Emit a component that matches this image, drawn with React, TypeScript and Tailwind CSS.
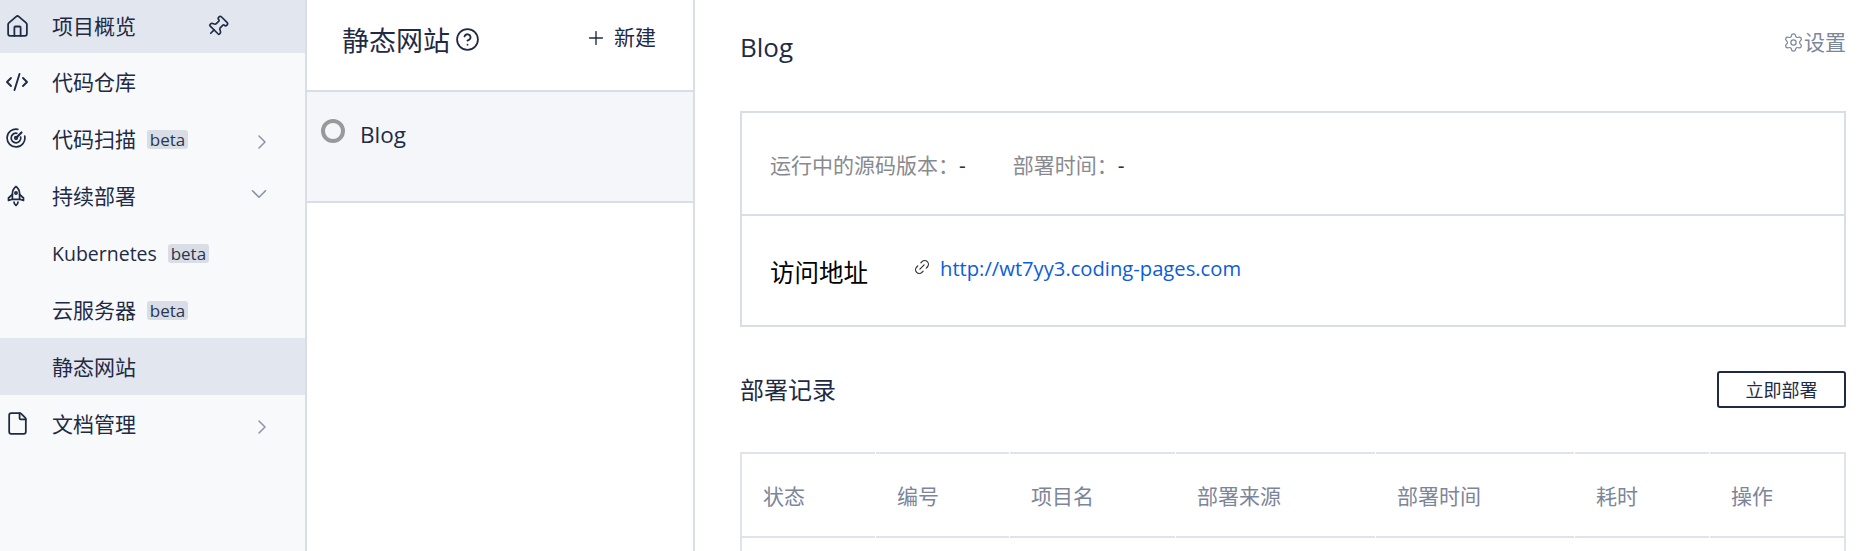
import React from "react";
import { House, CodeXml, File, Pin, CircleHelp, Plus, Link2, Settings, ChevronRight, ChevronDown } from "lucide-react";

const ff = { fontFamily: '"Open Sans","Noto Sans CJK SC",sans-serif' };

function Radar() {
  return (
    <svg width="20" height="20" viewBox="0 0 20 20" fill="none" stroke="#1f2a44" strokeWidth="1.7" strokeLinecap="round" className="ml-[-3px] mt-[-2px]">
      <path d="M11.800 1.300A8.900 8.900 0 1 0 18.700 8.200" />
      <path d="M10.800 5.300a4.800 4.800 0 1 0 3.900 3.900" />
      <circle cx="10" cy="10" r="1.300" />
      <path d="M10.500 9.500 15.500 4.500" strokeWidth="2.200" />
    </svg>
  );
}

function RocketIcon() {
  return (
    <svg width="20" height="22" viewBox="0 0 20 22" fill="none" stroke="#1f2a44" strokeWidth="1.700" strokeLinejoin="round" strokeLinecap="round" className="ml-[-2px]">
      <path d="M10 1.500c2.600 2 3.600 4.600 3.600 7.200v5.600H6.400V8.700C6.400 6.100 7.400 3.500 10 1.500Z" />
      <path d="M6.400 9.500 2.500 13v2.500l3.900-1.200" />
      <path d="M13.600 9.500 17.500 13v2.500l-3.900-1.200" />
      <circle cx="10" cy="8" r="1.100" />
      <path d="M8 17c0 1.500.8 2.700 2 3.500 1.200-.8 2-2 2-3.500" />
    </svg>
  );
}

function Beta() {
  return (
    <span className="ml-[11px] mt-[2px] inline-flex h-[19px] w-[41px] items-center justify-center rounded-[3px] bg-[#d8dde6] text-[17px] leading-none text-[#2a3550]">
      beta
    </span>
  );
}

function NavRow({
  icon,
  label,
  h = "h-[57px]",
  active = false,
  beta = false,
  chevron,
  latin = false,
  first = false,
  children,
}: {
  icon?: React.ReactNode;
  label: string;
  h?: string;
  active?: boolean;
  beta?: boolean;
  chevron?: "right" | "down";
  latin?: boolean;
  first?: boolean;
  children?: React.ReactNode;
}) {
  return (
    <div className={`flex ${h} items-center ${active ? "bg-[#e2e6ef]" : ""}`}>
      <div className="flex w-[52px] shrink-0 items-center justify-center pr-[18px]">{icon}</div>
      <span className={`${latin ? "text-[19.5px]" : "text-[21px]"} ${first ? "" : "mt-[2px]"} leading-none text-[#1f2a44]`}>{label}</span>
      {beta && <Beta />}
      {children}
      {chevron === "right" && (
        <ChevronRight size={24} strokeWidth={1.5} className="ml-auto mr-[31px] mt-[6px] text-[#8a94a8]" />
      )}
      {chevron === "down" && (
        <ChevronDown size={26} strokeWidth={1.5} className="ml-auto mr-[33px] mt-[-3px] text-[#8a94a8]" />
      )}
    </div>
  );
}

const cols: [string, string][] = [
  ["状态", "w-[133px]"],
  ["编号", "w-[133px]"],
  ["项目名", "w-[165px]"],
  ["部署来源", "w-[199px]"],
  ["部署时间", "w-[198px]"],
  ["耗时", "w-[134px]"],
  ["操作", "flex-1"],
];

export default function App() {
  return (
    <div className="flex h-screen w-full overflow-hidden bg-white" style={ff}>
      <aside className="w-[307px] shrink-0 border-r-2 border-[#d9dde6] bg-[#f8f9fb]">
        <NavRow h="h-[53px]" active first label="项目概览" icon={<House size={25} strokeWidth={1.7} color="#1f2a44" />}>
          <Pin size={23} strokeWidth={1.7} color="#1f2a44" className="ml-[70px] rotate-45" />
        </NavRow>
        <NavRow label="代码仓库" icon={<CodeXml size={24} strokeWidth={1.9} color="#1f2a44" />} />
        <NavRow label="代码扫描" beta chevron="right" icon={<Radar />} />
        <NavRow label="持续部署" chevron="down" icon={<RocketIcon />} />
        <NavRow label="Kubernetes" latin beta />
        <NavRow label="云服务器" beta />
        <NavRow active label="静态网站" />
        <NavRow label="文档管理" chevron="right" icon={<File size={25} strokeWidth={1.7} color="#1f2a44" />} />
      </aside>

      <section className="w-[388px] shrink-0 border-r-2 border-[#d9dde6]">
        <div className="flex h-[92px] items-start border-b-2 border-[#d9dde6] pl-[35px] pr-[37px] pt-[27px]">
          <span className="text-[27px] leading-none text-[#1f2a44]">静态网站</span>
          <CircleHelp size={25} strokeWidth={1.7} color="#1f2a44" className="ml-[5px]" />
          <Plus size={22} strokeWidth={1.5} color="#1f2a44" className="ml-auto" />
          <span className="ml-[7px] text-[21px] leading-none text-[#1f2a44]">新建</span>
        </div>
        <div className="flex h-[111px] items-start border-b-2 border-[#d9dde6] bg-[#f5f6fa] pl-[14px] pt-[27px]">
          <span className="h-[24px] w-[24px] rounded-full border-[4px] border-[#999999]" />
          <span className="ml-[15px] mt-[1px] text-[22.5px] leading-[30px] text-[#1f2a44]">Blog</span>
        </div>
      </section>

      <main className="flex min-w-0 flex-1 flex-col pl-[45px] pr-[16px]">
        <div className="flex h-[113px] shrink-0 items-start justify-between">
          <span className="mt-[29px] text-[26px] font-medium leading-[36px] text-[#1f2a44]">Blog</span>
          <span className="mt-[27px] flex items-center text-[21px] leading-[30px] text-[#7c869a]">
            <Settings size={21} strokeWidth={1.4} />
            <span>设置</span>
          </span>
        </div>
        <div className="shrink-0 border-2 border-t-0 border-[#d8dde6] [box-shadow:0_-2px_0_#d8dde6]">
          <div className="flex h-[103px] items-center border-b-2 border-[#d8dde6] pl-[28px] pt-[4px] text-[21px] leading-none text-[#888a90]">
            <span>运行中的源码版本：</span>
            <span className="text-[#333]">-</span>
            <span className="ml-[47px]">部署时间：</span>
            <span className="text-[#333]">-</span>
          </div>
          <div className="flex h-[109px] items-center pl-[28px]">
            <span className="mt-[5px] text-[24.5px] leading-none text-black">访问地址</span>
            <Link2 size={18} strokeWidth={1.6} color="#333" className="ml-[45px] mt-[-7px] -rotate-45" />
            <span className="ml-[9px] mt-[-4px] text-[20.2px] leading-none text-[#0b5ed7]">http://wt7yy3.coding-pages.com</span>
          </div>
        </div>
        <div className="flex h-[125px] shrink-0 items-center justify-between">
          <span className="mt-[1px] text-[24px] leading-none text-[#1f2a44]">部署记录</span>
          <span className="flex h-[37px] w-[129px] items-center justify-center rounded-[3px] border-2 border-[#1f2a44] text-[18px] leading-none text-[#1f2a44]">
            立即部署
          </span>
        </div>
        <div className="min-h-0 flex-1 border-x-2 border-x-[#e0e3ea]">
          <div className="flex h-[86px]">
            {cols.map(([label, w]) => (
              <div
                key={label}
                className={`flex items-center border-y-2 border-[#e0e3ea] pl-[21px] pt-[2px] text-[21px] leading-none text-[#7c869a] ${w} mr-[1px] last:mr-0`}
              >
                {label}
              </div>
            ))}
          </div>
        </div>
      </main>
    </div>
  );
}
